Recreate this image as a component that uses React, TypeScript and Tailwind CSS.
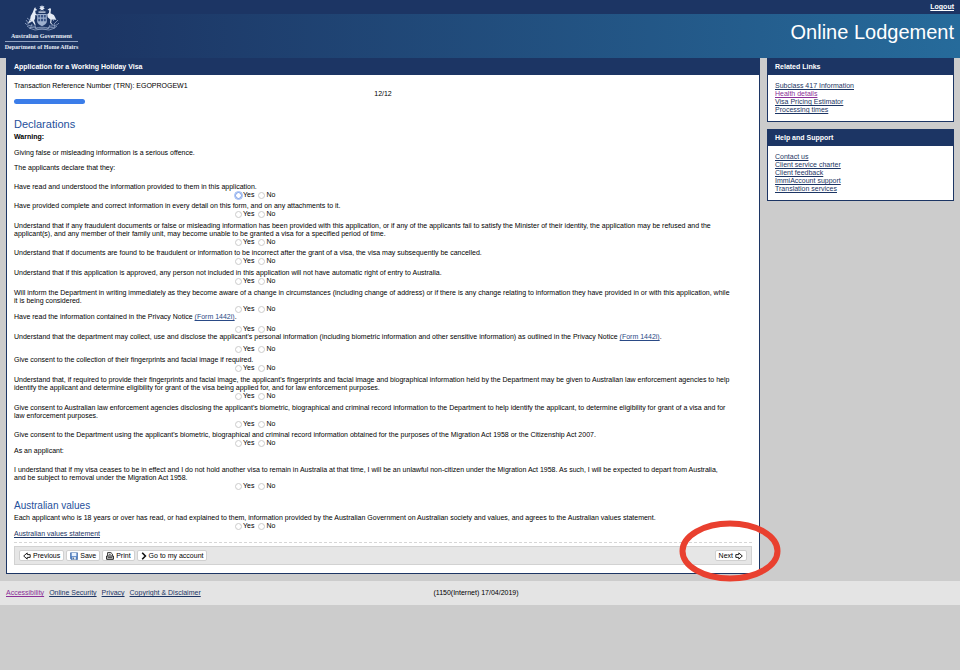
import { useState } from "react";
import type { ReactNode } from "react";

const link = "text-[#1c3564] underline";

function FormLink() {
  return (
    <a href="#form-1442i" className="text-[#2a4a86] underline">
      (Form 1442i)
    </a>
  );
}

type Row = { id: string; text: ReactNode; gap?: boolean; after?: "none" | "small" | "normal" };

const spacing = { none: "", small: "pb-[3px]", normal: "pb-1" };

const declarations: Row[] = [
  { id: "read", after: "small", text: "Have read and understood the information provided to them in this application." },
  { id: "complete", text: "Have provided complete and correct information in every detail on this form, and on any attachments to it." },
  {
    id: "fraud",
    after: "small",
    text: (
      <>
        Understand that if any fraudulent documents or false or misleading information has been provided with this application, or if any of the applicants fail to satisfy the Minister of their identity, the application may be refused and the
        <br />
        applicant(s), and any member of their family unit, may become unable to be granted a visa for a specified period of time.
      </>
    ),
  },
  { id: "cancel", text: "Understand that if documents are found to be fraudulent or information to be incorrect after the grant of a visa, the visa may subsequently be cancelled." },
  { id: "entry", text: "Understand that if this application is approved, any person not included in this application will not have automatic right of entry to Australia." },
  {
    id: "inform",
    after: "none",
    text: (
      <>
        Will inform the Department in writing immediately as they become aware of a change in circumstances (including change of address) or if there is any change relating to information they have provided in or with this application, while
        <br />
        it is being considered.
      </>
    ),
  },
  { id: "privacy", gap: true, after: "none", text: <>Have read the information contained in the Privacy Notice <FormLink />.</> },
  {
    id: "collect",
    gap: true,
    after: "small",
    text: <>Understand that the department may collect, use and disclose the applicant's personal information (including biometric information and other sensitive information) as outlined in the Privacy Notice <FormLink />.</>,
  },
  { id: "finger", text: "Give consent to the collection of their fingerprints and facial image if required." },
  {
    id: "law",
    text: "Understand that, if required to provide their fingerprints and facial image, the applicant's fingerprints and facial image and biographical information held by the Department may be given to Australian law enforcement agencies to help identify the applicant and determine eligibility for grant of the visa being applied for, and for law enforcement purposes.",
  },
  {
    id: "disclose",
    after: "small",
    text: (
      <>
        Give consent to Australian law enforcement agencies disclosing the applicant's biometric, biographical and criminal record information to the Department to help identify the applicant, to determine eligibility for grant of a visa and for
        <br />
        law enforcement purposes.
      </>
    ),
  },
  {
    id: "use",
    after: "none",
    text: "Give consent to the Department using the applicant's biometric, biographical and criminal record information obtained for the purposes of the Migration Act 1958 or the Citizenship Act 2007.",
  },
];

function Choice({ name, label, ring }: { name: string; label: string; ring?: boolean }) {
  return (
    <label className="flex items-center gap-px">
      <input
        type="radio"
        name={name}
        className={
          "size-[7px] appearance-none rounded-full border bg-white checked:bg-[#3b7de9] " +
          (ring ? "border-[#6f97e8] outline-1 outline-[#9dbaf3]" : "border-[#cbcbcb]")
        }
      />
      {label}
    </label>
  );
}

function Question({ id, text, gap, after = "normal", ring }: Row & { ring?: boolean }) {
  return (
    <fieldset className={spacing[after]}>
      <legend className="w-full">{text}</legend>
      <div className={"ml-[221px] flex h-2 gap-1 " + (gap ? "mt-1" : "")}>
        <Choice name={id} label="Yes" ring={ring} />
        <Choice name={id} label="No" />
      </div>
    </fieldset>
  );
}

function SidePanel({ title, links }: { title: string; links: string[] }) {
  return (
    <section className="border border-t-0 border-[#1c3564] bg-white">
      <h2 className="bg-[#1c3564] px-[7px] pt-[5px] pb-1 font-bold text-white">{title}</h2>
      <ul className="px-[7px] py-[7px]">
        {links.map((l) => (
          <li key={l}>
            <a href="#related" className={l === "Health details" ? "text-[#8b2f97] underline" : link}>
              {l}
            </a>
          </li>
        ))}
      </ul>
    </section>
  );
}

function Arrow({ flip }: { flip?: boolean }) {
  return (
    <svg viewBox="0 0 8 8" className={"size-2 " + (flip ? "rotate-180" : "")} fill="white" stroke="#222" strokeWidth="1" strokeLinejoin="round" aria-hidden="true">
      <path d="M7.2 2.6H4.2V.9L.7 4l3.5 3.1V5.4h3z" />
    </svg>
  );
}

function SaveIcon() {
  return (
    <svg viewBox="0 0 8 8" className="size-2" aria-hidden="true">
      <path d="M.5.8h7v6.7H1.3L.5 6.7z" fill="#4f7fc4" stroke="#34609f" strokeWidth=".6" />
      <path d="M1.7.9h4.7v3.3H1.7z" fill="#e8f2ff" />
      <path d="M2.1 5h3.8v2.5H2.1z" fill="#dce4ee" />
      <path d="M2.7 5.4h1v1.8h-1z" fill="#27456f" />
    </svg>
  );
}

function PrintIcon() {
  return (
    <svg viewBox="0 0 8 8" className="size-2" fill="none" stroke="#222" aria-hidden="true">
      <path d="M1.6 3.8V.6h3.3l1.5 1.4v1.8" fill="white" strokeWidth=".9" />
      <path d="M.6 4h6.8v3.3H.6z" fill="#ddd" strokeWidth="1" />
      <path d="M1.8 5.6h4.4M2.8 2.3h2" strokeWidth=".8" />
    </svg>
  );
}

function ChevronIcon() {
  return (
    <svg viewBox="0 0 6 8" className="h-2 w-[6px]" fill="none" stroke="#111" strokeWidth="1.6" aria-hidden="true">
      <path d="M1.2.8 4.4 4 1.2 7.2" />
    </svg>
  );
}

function Crest() {
  return (
    <svg viewBox="0 0 36 26" className="h-[26px] w-9" fill="#e3eaf5" aria-hidden="true">
      <path d="m18 0 .7 1.6 1.7-.5-.8 1.6 1.4 1-1.7.4.1 1.7L18 4.7l-1.4 1.1.1-1.7-1.7-.4 1.4-1-.8-1.6 1.7.5z" />
      <path d="M14.5 6.5h7v1.2h-7z" />
      <path d="M13.2 9h9.6v7.5c0 2.3-2.4 3.6-4.8 4.8-2.4-1.2-4.8-2.5-4.8-4.8z" fill="#9db0ce" />
      <path d="M14.2 10h2v2.5h-2zm2.8 0h2v2.5h-2zm2.8 0h2v2.5h-2zm-5.6 3.7h2v2.5h-2zm2.8 0h2v2.5h-2zm2.8 0h2v2.5h-2z" fill="#3a5486" />
      <path d="m10.4 3.1 1-.8.3 1.5 1.2.8-.3.9-1.4.2.5 3 1.7 1.2-.3.7-1.8-.5-.2 3.3-1 2.2 1.5 4.2-.7.4-2.7-4-2 1.4-3.9 1.4L4 18.1l2.1-3.5.6-3.6 2-3.5z" />
      <path d="M25.3 3.6c.8-.8 1.7-.4 1.7.6l-.5 4.1 3.4 1.6 2.5 4.8-2.1.1-2.6-.3-.5 3.2 1.6 2-.6.4-2.1-2.1.3-3.6-2.7-2.1-.5-3 1.7-1.4.4-2.5-1.8-.7z" />
      <g fill="none" stroke="#93a6c7" strokeWidth=".8">
        <path d="M1 18c3 4 8 1.4 11 5 3-1 9-1 12 0 3-3.6 8-1 11-5M3 21c3 3 7 .2 10 3h10c3-2.8 7 0 10-3M7 16l-4-3m26 3 3-3M5 23l6 2 7-1 7 1 6-2" />
        <path d="m8 19-2 5m5-4 1 4m14-4-2 4m6-5 1 4M2 15l3 4m29-4-4 4" />
      </g>
    </svg>
  );
}

function ToolButton({ children }: { children: ReactNode }) {
  return (
    <button type="button" className="flex h-[11px] items-center gap-[2px] rounded-[2px] border border-[#d0d0d0] bg-white px-[3px] text-[7px] leading-[8px]">
      {children}
    </button>
  );
}

export default function App() {
  const [page] = useState("12/12");
  return (
    <div className="min-h-screen bg-[#ccc] font-['Liberation_Sans',Arial,sans-serif] text-[7px] leading-[8px] text-black">
      <header className="flex h-[58px] bg-linear-to-r from-[#1c3564] from-10% to-[#266b9b]">
        <div className="flex w-[83px] flex-col items-center bg-[#1c3564] pt-[5px] font-['Liberation_Serif',serif] text-[6px] leading-[8px] font-bold whitespace-nowrap text-[#e6ecf5]">
          <Crest />
          <span className="mt-px">Australian Government</span>
          <span className="mt-px border-t border-[#8fa1c0] pt-px">Department of Home Affairs</span>
        </div>
        <div className="min-w-0 flex-1 text-right text-white">
          <div className="flex h-[14px] items-center justify-end bg-[#1c3564] px-[6px]">
            <a href="#logout" className="font-bold underline">Logout</a>
          </div>
          <h1 className="px-[6px] pt-[6px] text-[20px] leading-[24px]">Online Lodgement</h1>
        </div>
      </header>

      <div className="flex items-start gap-[7px] px-[6px]">
        <main className="min-w-0 flex-1 border border-t-0 border-[#1c3564] bg-white">
          <h2 className="bg-[#1c3564] px-[7px] pt-[5px] pb-1 font-bold text-white">Application for a Working Holiday Visa</h2>
          <div className="px-[7px] pt-[7px] pb-2">
            <p>Transaction Reference Number (TRN): EGOPROGEW1</p>
            <p className="text-center">{page}</p>
            <div className="mt-px h-[5px] w-[71px] rounded-full bg-[#3b7de9]" />
            <h3 className="mt-3 text-[11px] leading-[16px] text-[#1f509b]">Declarations</h3>
            <p className="mt-px font-bold">Warning:</p>
            <p className="mt-2">Giving false or misleading information is a serious offence.</p>
            <p className="mt-[7px]">The applicants declare that they:</p>
            <div className="mt-[11px]">
              {declarations.map((d, i) => (
                <Question key={d.id} {...d} ring={i === 0} />
              ))}
            </div>
            <p>As an applicant:</p>
            <div className="mt-[11px]">
              <Question
                id="cease"
                text={
                  <>
                    I understand that if my visa ceases to be in effect and I do not hold another visa to remain in Australia at that time, I will be an unlawful non-citizen under the Migration Act 1958. As such, I will be expected to depart from Australia,
                    <br />
                    and be subject to removal under the Migration Act 1958.
                  </>
                }
              />
            </div>
            <h3 className="mt-[5px] mb-px text-[10px] leading-[14px] text-[#1f509b]">Australian values</h3>
            <Question
              id="values"
              after="none"
              text="Each applicant who is 18 years or over has read, or had explained to them, information provided by the Australian Government on Australian society and values, and agrees to the Australian values statement."
            />
            <a href="#values" className={link}>Australian values statement</a>
            <div className="relative mt-1 border-t border-dashed border-[#d6d6d6] pt-[3px]">
              <div className="flex items-center gap-[2px] border border-[#d2d2d2] bg-[#e6e6e6] px-1 py-[3px]">
                <ToolButton><Arrow />Previous</ToolButton>
                <ToolButton><SaveIcon />Save</ToolButton>
                <ToolButton><PrintIcon />Print</ToolButton>
                <ToolButton><ChevronIcon />Go to my account</ToolButton>
                <div className="ml-auto">
                  <ToolButton>Next<Arrow flip /></ToolButton>
                </div>
              </div>
              <svg viewBox="0 0 102 62" className="pointer-events-none absolute -top-[23px] -right-[29px] h-[62px] w-[102px]" fill="none" stroke="#e9402f" strokeWidth="6" aria-hidden="true">
                <ellipse cx="51" cy="31" rx="47.5" ry="27.5" />
              </svg>
            </div>
          </div>
        </main>

        <aside className="flex w-[187px] flex-col gap-[7px]">
          <SidePanel title="Related Links" links={["Subclass 417 Information", "Health details", "Visa Pricing Estimator", "Processing times"]} />
          <SidePanel title="Help and Support" links={["Contact us", "Client service charter", "Client feedback", "ImmiAccount support", "Translation services"]} />
        </aside>
      </div>

      <footer className="mt-[7px] grid h-6 grid-cols-[1fr_auto_1fr] items-center bg-[#e4e4e4] pr-[14px] pl-[6px]">
        <nav className="flex gap-[5px]">
          <a href="#accessibility" className="text-[#8b2f97] underline">Accessibility</a>
          <a href="#security" className={link}>Online Security</a>
          <a href="#privacy" className={link}>Privacy</a>
          <a href="#copyright" className={link}>Copyright &amp; Disclaimer</a>
        </nav>
        <p>(1150(Internet) 17/04/2019)</p>
      </footer>
    </div>
  );
}
